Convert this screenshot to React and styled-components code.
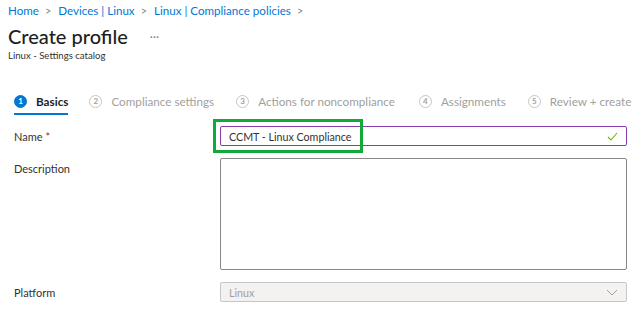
import React from "react";
import styled, { createGlobalStyle } from "styled-components";

const Global = createGlobalStyle`
  html, body { margin: 0; padding: 0; background: #fff; }
  body { font-family: Lato, "Noto Sans", sans-serif; color: #323130; }
`;

const Page = styled.div`
  width: 640px;
  height: 311px;
  overflow: hidden;
  box-sizing: border-box;
`;

const Header = styled.div`
  padding: 1px 0 0 8px;
`;

const Crumbs = styled.div`
  display: flex;
  align-items: center;
  height: 18px;
  font-size: 11.6px;
  color: #0078d4;
  white-space: nowrap;
`;

const Sep = styled.span`
  color: #8a8886;
  margin: 0 7px 0 6px;
  font-size: 11px;
`;

const TitleRow = styled.div`
  display: flex;
  align-items: center;
  margin-top: 3px;
  height: 28px;
`;

const Title = styled.h1`
  margin: 0;
  font-size: 20px;
  font-weight: 500;
  color: #201f1e;
`;

const More = styled.span`
  margin-left: 22px;
  font-size: 12px;
  color: #8a8886;
  margin-top: 0;
`;

const Sub = styled.div`
  font-size: 9.6px;
  color: #323130;
`;

const Tabs = styled.div`
  display: flex;
  padding-left: 14px;
  margin-top: 28px;
  height: 28px;
  white-space: nowrap;
`;

const Tab = styled.div`
  display: flex;
  align-items: center;
  height: 24px;
  margin-right: ${(p) => p.gap}px;
  font-size: 11.7px;
  color: ${(p) => (p.active ? "#201f1e" : "#a19f9d")};
  font-weight: ${(p) => (p.active ? 700 : 400)};
  border-bottom: 2px solid ${(p) => (p.active ? "#0078d4" : "transparent")};
`;

const Step = styled.span`
  display: inline-flex;
  align-items: center;
  justify-content: center;
  width: 13px;
  height: 13px;
  border-radius: 50%;
  margin-right: 9px;
  font-size: 8px;
  font-weight: 700;
  box-sizing: border-box;
  background: ${(p) => (p.active ? "#0078d4" : "transparent")};
  color: ${(p) => (p.active ? "#fff" : "#a19f9d")};
  border: 1px solid ${(p) => (p.active ? "#0078d4" : "#c8c6c4")};
`;

const Form = styled.div`
  display: grid;
  grid-template-columns: 206px 407px;
  padding-left: 14px;
  margin-top: 9px;
  row-gap: 12px;
`;

const Label = styled.div`
  font-size: 11px;
  color: #323130;
  padding-top: 4px;
`;

const Req = styled.span`
  color: #a4262c;
`;

const Highlight = styled.div`
  position: relative;
`;

const Callout = styled.div`
  position: absolute;
  left: -7px;
  top: -7px;
  width: 150px;
  height: 34px;
  border: 3px solid #12a83a;
  box-sizing: border-box;
`;

const Field = styled.div`
  display: flex;
  align-items: center;
  justify-content: space-between;
  height: 20px;
  box-sizing: border-box;
  padding: 0 8px;
  font-size: 10.7px;
  white-space: nowrap;
  border: 1px solid ${(p) => p.border || "#8a8886"};
  background: ${(p) => p.bg || "#fff"};
  color: ${(p) => p.color || "#323130"};
  border-radius: 2px;
`;

const Area = styled.div`
  height: 112px;
  border: 1px solid #8a8886;
  border-radius: 2px;
  box-sizing: border-box;
`;

const tabs = [
  { n: 1, label: "Basics", gap: 21, active: true },
  { n: 2, label: "Compliance settings", gap: 22 },
  { n: 3, label: "Actions for noncompliance", gap: 24 },
  { n: 4, label: "Assignments", gap: 22 },
  { n: 5, label: "Review + create", gap: 0 },
];

export default function App() {
  return (
    <Page>
      <Global />
      <Header>
        <Crumbs>
          <span>Home</span>
          <Sep>&gt;</Sep>
          <span>Devices | Linux</span>
          <Sep>&gt;</Sep>
          <span>Linux | Compliance policies</span>
          <Sep>&gt;</Sep>
        </Crumbs>
        <TitleRow>
          <Title>Create profile</Title>
          <More>···</More>
        </TitleRow>
        <Sub>Linux - Settings catalog</Sub>
      </Header>

      <Tabs>
        {tabs.map((t) => (
          <Tab key={t.n} active={t.active} gap={t.gap}>
            <Step active={t.active}>{t.n}</Step>
            {t.label}
          </Tab>
        ))}
      </Tabs>

      <Form>
        <Label>
          Name <Req>*</Req>
        </Label>
        <Highlight>
          <Field border="#8a3bab">
            <span>CCMT - Linux Compliance</span>
            <svg width="11" height="9" viewBox="0 0 11 9">
              <path d="M1 5 L4 8 L10 1" fill="none" stroke="#6bb700" strokeWidth="1.1" />
            </svg>
          </Field>
          <Callout />
        </Highlight>

        <Label>Description</Label>
        <Area />

        <Label>Platform</Label>
        <Field bg="#f3f2f1" color="#a19f9d" border="#c8c6c4">
          <span>Linux</span>
          <svg width="12" height="7" viewBox="0 0 12 7">
            <path d="M1 1 L6 6 L11 1" fill="none" stroke="#a19f9d" strokeWidth="1" />
          </svg>
        </Field>
      </Form>
    </Page>
  );
}
